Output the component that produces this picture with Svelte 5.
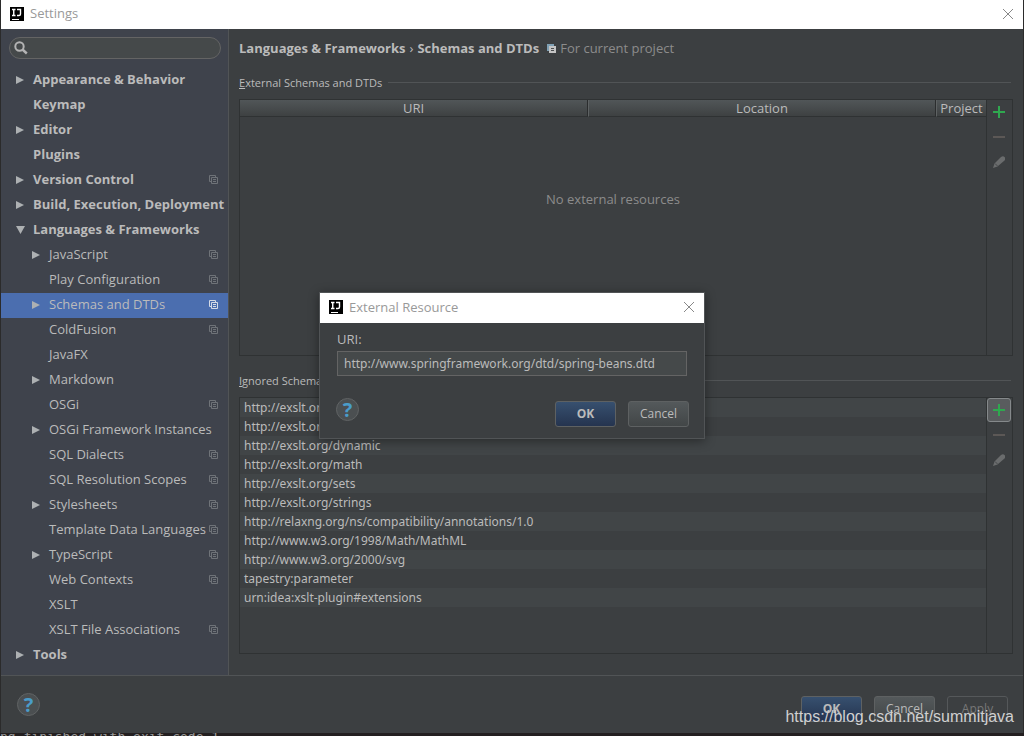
<script>
  let uri = "http://www.springframework.org/dtd/spring-beans.dtd";
  let search = "";
  let selected = "Schemas and DTDs";

  const tree = [
    { name: "Appearance & Behavior", arrow: "right", top: true },
    { name: "Keymap", top: true },
    { name: "Editor", arrow: "right", top: true },
    { name: "Plugins", top: true },
    { name: "Version Control", arrow: "right", top: true, project: true },
    { name: "Build, Execution, Deployment", arrow: "right", top: true },
    { name: "Languages & Frameworks", arrow: "down", top: true },
    { name: "JavaScript", arrow: "right", project: true },
    { name: "Play Configuration", project: true },
    { name: "Schemas and DTDs", arrow: "right", project: true },
    { name: "ColdFusion", project: true },
    { name: "JavaFX" },
    { name: "Markdown", arrow: "right" },
    { name: "OSGi", project: true },
    { name: "OSGi Framework Instances", arrow: "right" },
    { name: "SQL Dialects", project: true },
    { name: "SQL Resolution Scopes", project: true },
    { name: "Stylesheets", arrow: "right", project: true },
    { name: "Template Data Languages", project: true },
    { name: "TypeScript", arrow: "right", project: true },
    { name: "Web Contexts", project: true },
    { name: "XSLT" },
    { name: "XSLT File Associations", project: true },
    { name: "Tools", arrow: "right", top: true }
  ];

  const ignored = [
    "http://exslt.org/common",
    "http://exslt.org/dates-and-times",
    "http://exslt.org/dynamic",
    "http://exslt.org/math",
    "http://exslt.org/sets",
    "http://exslt.org/strings",
    "http://relaxng.org/ns/compatibility/annotations/1.0",
    "http://www.w3.org/1998/Math/MathML",
    "http://www.w3.org/2000/svg",
    "tapestry:parameter",
    "urn:idea:xslt-plugin#extensions"
  ];
</script>

{#snippet logo()}
  <svg class="logo" width="14" height="14" viewBox="0 0 14 14" aria-hidden="true">
    <rect width="14" height="14" fill="#000" />
    <path d="M2 2.500h3.500M3.750 2.500v6M2 8.500h3.500M7 2.500h3.500v4.500q0 1.500-1.500 1.500h-2" fill="none" stroke="#fff" stroke-width="1.400" />
    <path d="M2 12.500h7" stroke="#fff" stroke-width="1" />
  </svg>
{/snippet}

{#snippet cross()}
  <svg width="10" height="10" viewBox="0 0 10 10" aria-hidden="true">
    <path d="M0 0l10 10M10 0L0 10" stroke="#888" stroke-width="1" />
  </svg>
{/snippet}

{#snippet tools(active)}
  <div class="tools">
    <button class="tool" class:active aria-label="Add">
      <svg width="12" height="12" viewBox="0 0 12 12"><path d="M0 6h12M6 0v12" stroke="#2fa84f" stroke-width="2" /></svg>
    </button>
    <button class="tool" aria-label="Remove" disabled>
      <svg width="12" height="12" viewBox="0 0 12 12"><path d="M0 6h12" stroke="#5c5856" stroke-width="2" /></svg>
    </button>
    <button class="tool" aria-label="Edit" disabled>
      <svg width="12" height="12" viewBox="0 0 12 12">
        <path d="M0 12l1.500-4.500L8 1q2-1.500 3.500 0t0 3.500L4.500 10.500z" fill="#6a6c6d" />
        <path d="M2 7.500l2.500 2.500" stroke="#3c3f41" stroke-width="0.800" />
      </svg>
    </button>
  </div>
{/snippet}

<div class="desktop">
  <div class="window">
    <header class="titlebar">
      {@render logo()}
      <span>Settings</span>
      <button class="close" aria-label="Close">{@render cross()}</button>
    </header>

    <div class="body">
      <nav class="sidebar">
        <label class="search">
          <svg width="14" height="14" viewBox="0 0 14 14" aria-hidden="true">
            <circle cx="5.500" cy="5.500" r="4.200" fill="none" stroke="#b4b4b4" stroke-width="2" />
            <path d="M8.500 8.500l4.300 4" stroke="#b4b4b4" stroke-width="2.400" />
          </svg>
          <input type="text" aria-label="Search settings" bind:value={search} />
        </label>
        <ul>
          {#each tree as item}
            <li>
              <button
                class="node"
                class:top={item.top}
                class:selected={item.name === selected}
                on:click={() => (selected = item.name)}>
                <span class="arrow">
                  {#if item.arrow === "right"}
                    <svg width="8" height="8" viewBox="0 0 8 8"><path d="M0 0l8 4-8 4z" fill="#adb0b2" /></svg>
                  {:else if item.arrow === "down"}
                    <svg width="9" height="8" viewBox="0 0 9 8"><path d="M0 0h9L4.500 8z" fill="#adb0b2" /></svg>
                  {/if}
                </span>
                <span class="name">{item.name}</span>
                {#if item.project}
                  <svg class="copy" width="9" height="9" viewBox="0 0 9 9">
                    <path d="M2 6.500H.5v-6h6V2M2.500 2.500h6v6h-6zM4 4.500h3M4 6.500h3" fill="none" stroke="currentColor" />
                  </svg>
                {/if}
              </button>
            </li>
          {/each}
        </ul>
      </nav>

      <main>
        <h1>
          <b>Languages &amp; Frameworks</b>
          <span class="sep">›</span>
          <b>Schemas and DTDs</b>
          <svg width="9" height="9" viewBox="0 0 9 9" aria-hidden="true">
            <path d="M0 0h7v2H2v5H0z" fill="#7fa0b4" />
            <path d="M2 2h7v7H2z" fill="#c4c4c4" />
            <path d="M4 4.500h3M4 6.500h3" stroke="#4a4d4f" />
          </svg>
          <span class="scope">For current project</span>
        </h1>

        <section>
          <h2><span><u>E</u>xternal Schemas and DTDs</span></h2>
          <div class="panel">
            <div class="content">
              <table>
                <thead>
                  <tr><th>URI</th><th>Location</th><th class="project">Project</th></tr>
                </thead>
              </table>
              <p class="empty">No external resources</p>
            </div>
            {@render tools(false)}
          </div>
        </section>

        <section>
          <h2><span><u>I</u>gnored Schemas and DTDs</span></h2>
          <div class="panel">
            <ul class="content ignored">
              {#each ignored as url}
                <li>{url}</li>
              {/each}
            </ul>
            {@render tools(true)}
          </div>
        </section>
      </main>
    </div>

    <footer>
      <button class="help" aria-label="Help">?</button>
      <div class="actions">
        <button class="btn primary">OK</button>
        <button class="btn">Cancel</button>
        <button class="btn" disabled>Apply</button>
      </div>
    </footer>
  </div>
  <div class="console">ng finished with exit code 1</div>

  <div class="overlay">
    <div class="dialog" role="dialog" aria-labelledby="dialog-title">
      <header class="titlebar">
        {@render logo()}
        <span id="dialog-title">External Resource</span>
        <button class="close" aria-label="Close">{@render cross()}</button>
      </header>
      <div class="form">
        <label for="uri">URI:</label>
        <input id="uri" type="text" bind:value={uri} />
      </div>
      <div class="dialog-footer">
        <button class="help" aria-label="Help">?</button>
        <div class="actions">
          <button class="btn primary">OK</button>
          <button class="btn">Cancel</button>
        </div>
      </div>
    </div>
  </div>

  <div class="watermark">https://blog.csdn.net/summitjava</div>
</div>

<style>
  :global(body) {
    margin: 0;
    background: #2b2b2b;
  }

  .desktop {
    position: relative;
    display: flex;
    flex-direction: column;
    min-height: 100vh;
    overflow: hidden;
    font: 13px/19px "Open Sans", "Noto Sans", sans-serif;
    color: #bbbbbb;
  }

  .desktop * {
    box-sizing: border-box;
  }

  button,
  input {
    font: inherit;
    color: inherit;
  }

  button {
    padding: 0;
    border: none;
    background: none;
  }

  svg {
    display: block;
    flex: none;
  }

  ul {
    margin: 0;
    padding: 0;
    list-style: none;
  }

  .window {
    flex: 1;
    display: flex;
    flex-direction: column;
    margin: 0 1px;
    background: #3c3f41;
  }

  .titlebar {
    display: flex;
    align-items: center;
    gap: 6px;
    height: 29px;
    padding: 0 10px 2px 9px;
    background: #fff;
    color: #999;
  }

  .close {
    margin-left: auto;
  }

  .body {
    flex: 1;
    display: flex;
  }

  .sidebar {
    width: 228px;
    padding-top: 8px;
    border-right: 1px solid #515456;
    background: #3f434c;
  }

  .search {
    display: flex;
    align-items: center;
    height: 22px;
    margin: 0 7px 9px 8px;
    padding: 0 4px;
    border: 1px solid #646464;
    border-radius: 11px;
    background: #45494a;
  }

  .search input {
    flex: 1;
    min-width: 0;
    border: none;
    outline: none;
    background: none;
  }

  .node {
    display: flex;
    align-items: center;
    width: 100%;
    height: 25px;
    padding: 0 10px 2px 31px;
    text-align: left;
    white-space: nowrap;
  }

  .node.top {
    padding-left: 15px;
    font-weight: bold;
  }

  .node.selected {
    background: #4b6eaf;
  }

  .arrow {
    flex: none;
    width: 17px;
  }

  .name {
    flex: 1;
    min-width: 0;
  }

  .copy {
    color: #6f7378;
  }

  .selected .copy {
    color: #d5dbe6;
  }

  main {
    flex: 1;
    display: flex;
    flex-direction: column;
    min-width: 0;
    padding: 10px 10px 21px;
  }

  h1,
  h2 {
    display: flex;
    align-items: center;
    margin: 0;
    font-size: 13px;
    font-weight: normal;
  }

  h1 {
    margin-bottom: 15px;
  }

  .sep {
    width: 12px;
    text-align: center;
  }

  h1 svg {
    margin: 0 4px 0 8px;
  }

  .scope,
  .empty {
    color: #8c8c8c;
  }

  section {
    flex: 1;
    display: flex;
    flex-direction: column;
  }

  section + section {
    margin-top: 15px;
  }

  h2 {
    gap: 6px;
    margin-bottom: 7px;
    font-size: 11px;
  }

  h2::after {
    content: "";
    flex: 1;
    height: 1px;
    margin-right: 2px;
    background: #515456;
  }

  .panel {
    flex: 1;
    display: flex;
    border: 1px solid #2f3233;
  }

  .content {
    flex: 1;
    min-width: 0;
  }

  table {
    width: 100%;
    border-spacing: 0;
    table-layout: fixed;
  }

  th {
    height: 17px;
    padding: 0;
    border-bottom: 1px solid #2f3233;
    border-right: 1px solid #2b2d2e;
    background: linear-gradient(#515658, #3e4142);
    font-weight: normal;
    line-height: 16px;
  }

  th + th {
    border-left: 1px solid #5e6263;
  }

  th:last-child {
    border-right: none;
  }

  .project {
    width: 50px;
  }

  .empty {
    margin: 73px 0 0;
    text-align: center;
  }

  .ignored,
  .form input {
    font-family: "Noto Sans", sans-serif;
    font-size: 12px;
  }

  .ignored li {
    padding: 0 4px;
  }

  .ignored li:nth-child(odd) {
    background: #414547;
  }

  .tools {
    display: flex;
    flex-direction: column;
    align-items: center;
    gap: 1px;
    width: 26px;
    padding-right: 1px;
    border-left: 1px solid #2f3233;
  }

  .tool {
    display: grid;
    place-items: center;
    width: 24px;
    height: 24px;
    border: 1px solid transparent;
    border-radius: 3px;
  }

  .tool.active {
    border-color: #85898b;
    background: #595c5e;
  }

  footer {
    display: flex;
    justify-content: space-between;
    height: 58px;
    padding: 17px 15px 0 16px;
    border-top: 1px solid #515456;
  }

  .help {
    width: 23px;
    height: 23px;
    border: 1px solid #606364;
    border-radius: 50%;
    background: #4b4f51;
    color: #4a9cc9;
    font-size: 20px;
    font-weight: bold;
    line-height: 20px;
  }

  .actions {
    display: flex;
    gap: 12px;
    padding-top: 3px;
  }

  .btn {
    width: 61px;
    height: 26px;
    padding-bottom: 2px;
    border: 1px solid #5e6162;
    border-radius: 3px;
    background: linear-gradient(#54595b, #424647);
    font-size: 12px;
  }

  .btn.primary {
    background: linear-gradient(#37506f, #25344f);
    font-weight: bold;
  }

  .btn:disabled {
    border-color: #55585a;
    background: none;
    color: #777;
  }

  .console {
    height: 3px;
    overflow: hidden;
    background: #231f20;
    color: #999;
    font: 13px/8px "DejaVu Sans Mono", monospace;
  }

  .overlay {
    position: absolute;
    inset: 0 0 5px;
    display: grid;
    place-items: center;
  }

  .dialog {
    width: 386px;
    border: 1px solid #515456;
    background: #3c3f41;
    box-shadow: 0 2px 10px rgba(0, 0, 0, 0.4);
  }

  .dialog .titlebar {
    height: 30px;
    padding: 0 10px 2px 9px;
  }

  .form {
    display: flex;
    flex-direction: column;
    gap: 2px;
    padding: 7px 17px 0;
  }

  .form input {
    height: 25px;
    padding: 0 6px;
    border: 1px solid #646464;
    outline: none;
    background: #45494a;
  }

  .dialog-footer {
    display: flex;
    justify-content: space-between;
    padding: 22px 15px 11px 16px;
  }

  .watermark {
    position: absolute;
    right: 10px;
    bottom: 9px;
    color: #d0d0d0;
    font: 16px/20px "Liberation Sans", sans-serif;
  }
</style>
